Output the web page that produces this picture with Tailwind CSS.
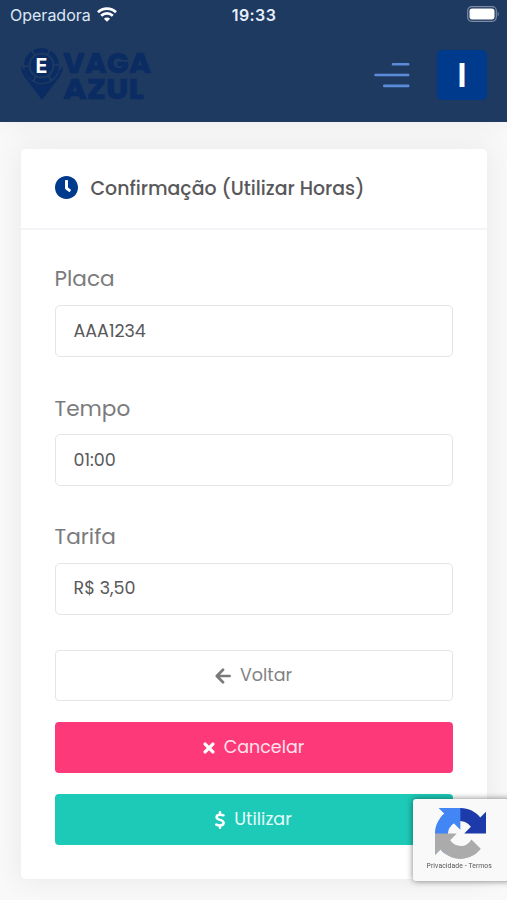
<!DOCTYPE html>
<html lang="pt-BR">
<head>
    <meta charset="utf-8">
    <title>Vaga Azul</title>
    <meta name="viewport" content="width=device-width, initial-scale=1.0">
    <script src="https://cdn.jsdelivr.net/npm/@tailwindcss/browser@4"></script>
</head>
<body class="bg-[#f9f9fa] h-[900px] overflow-hidden font-[Poppins,Inter,sans-serif]">
    <!-- Status bar + header -->
    <header class="h-[122px] bg-[#1f3a61] relative z-10 shadow-[0_0_28px_0_rgba(0,0,0,0.06)]">
        <div class="h-[30px] grid grid-cols-3 items-center pl-[10px] pr-2 text-white font-[Inter,sans-serif]">
            <div class="flex items-center gap-[6px]">
                <span class="text-[16px] leading-[30px] text-[#dce7f5]">Operadora</span>
                <svg class="w-[20px] h-[15px] -mt-[2px]" viewBox="0 0 20 15" fill="none" stroke="#fff" stroke-width="2.7">
                    <path d="M1 5.3a12.8 12.8 0 0 1 18 0M4.2 8.7a8.2 8.2 0 0 1 11.6 0"/>
                    <path d="M10 14.8L6.9 11.7a4.4 4.4 0 0 1 6.2 0z" fill="#fff" stroke="none"/>
                </svg>
            </div>
            <span class="text-center text-[16px] font-semibold tracking-[0.4px] text-[#e6effb] -ml-[1px]">19:33</span>
            <svg class="justify-self-end w-[34px] h-[16px] -mt-[2px]" viewBox="0 0 34 16">
                <rect x="2.7" y=".7" width="28.6" height="14.6" rx="4" fill="none" stroke="#7d8ba4" stroke-width="1.2"/>
                <rect x="4.5" y="2.6" width="25" height="10.8" rx="2.6" fill="#fff"/>
                <path d="M32.6 5.5c1.5.7 1.5 4.3 0 5z" fill="#7d8ba4"/>
            </svg>
        </div>
        <div class="flex items-center justify-between pl-[21px] pr-[20px] pt-[18px]">
            <svg class="w-[134px] h-[54px] overflow-visible" viewBox="0 0 134 54" fill="#0a2c63">
                <path d="M0 18c0 3 1 7 3.5 11L21 52l17.5-23c2.5-4 3.5-8 3.5-11l-4 5a17.5 17.5 0 0 1-34 0z"/>
                <circle cx="20.5" cy="17.5" r="15.2" fill="none" stroke="#0a2c63" stroke-width="4.5" stroke-dasharray="13.9 2"/>
                <circle cx="20.5" cy="17.5" r="11"/>
                <text x="20.5" y="24.8" text-anchor="middle" fill="#fff" font-family="Inter" font-weight="700" font-size="19.5">E</text>
                <g font-family="Poppins, Inter" font-weight="800" font-size="28.5" stroke="#0a2c63" stroke-width=".3">
                    <text x="42" y="25.3" textLength="88" lengthAdjust="spacingAndGlyphs">VAGA</text>
                    <text x="42" y="50.5" textLength="81" lengthAdjust="spacingAndGlyphs">AZUL</text>
                </g>
            </svg>
            <div class="flex items-center gap-[27px]">
                <svg class="w-[36px] h-[28px]" viewBox="0 0 36 28" stroke="#5b8cda" stroke-width="2.6" stroke-linecap="round">
                    <path d="M19 3.2H34.2M1.5 14H34.2M10.3 24.9H34.2"/>
                </svg>
                <div class="w-[50px] h-[50px] rounded-[5px] bg-[#003a8c] flex items-center justify-center">
                    <span class="text-white text-[34px] leading-none font-semibold">I</span>
                </div>
            </div>
        </div>
    </header>

    <!-- Card -->
    <main class="mx-[20.5px] mt-[27px] h-[730px] bg-white rounded-[5px] shadow-[0_0_28px_4px_rgba(0,0,0,0.06)]">
        <div class="h-[81px] flex items-center gap-[14px] pl-[34px] pb-[2px] border-b-2 border-[#f3f3f8]">
            <svg class="w-[23px] h-[23px]" viewBox="8 8 496 496" fill="#003a8c">
                <path d="M256,8C119,8,8,119,8,256S119,504,256,504,504,393,504,256,393,8,256,8Zm92.49,313h0l-20,25a16,16,0,0,1-22.49,2.5h0l-67-49.72a40,40,0,0,1-15-31.23V112a16,16,0,0,1,16-16h32a16,16,0,0,1,16,16V256l58,42.5A16,16,0,0,1,348.49,321Z"/>
            </svg>
            <h1 class="text-[18.9px] font-medium text-[#58585a] whitespace-nowrap pt-[3px] -ml-[1px]">Confirmação (Utilizar Horas)</h1>
        </div>
        <div class="px-[34px] pt-[32px]">
            <div class="h-[128.5px]">
                <label class="block h-[43px] text-[21.6px] leading-[34px] text-[#7b7b7d]">Placa</label>
                <div class="h-[52px] border-[1.5px] border-[#e5e5e8] rounded-[5px] px-[18px] text-[17.5px] leading-[50px] text-[#58585a]">AAA1234</div>
            </div>
            <div class="h-[129px]">
                <label class="block h-[43px] text-[21.6px] leading-[35px] text-[#7b7b7d]">Tempo</label>
                <div class="h-[52px] border-[1.5px] border-[#e5e5e8] rounded-[5px] px-[18px] text-[17.5px] leading-[50px] text-[#58585a]">01:00</div>
            </div>
            <div class="h-[130.5px]">
                <label class="block h-[43px] text-[21.6px] leading-[34px] text-[#7b7b7d]">Tarifa</label>
                <div class="h-[52px] border-[1.5px] border-[#e5e5e8] rounded-[5px] px-[18px] text-[17.5px] leading-[49px] text-[#58585a]">R$ 3,50</div>
            </div>
            <div class="flex flex-col gap-[21px] text-[17.5px]">
                <button class="h-[51px] border-[1.5px] border-[#e5e5e8] rounded-[4px] flex items-center justify-center gap-[9px] text-[#838385]">
                    <svg class="w-[16px] h-[16px]" viewBox="0 0 16 16" fill="none" stroke="#7a7a7c" stroke-width="2.7" stroke-linecap="round" stroke-linejoin="round">
                        <path d="M8 1.8L1.8 8L8 14.2M2 8H14.6"/>
                    </svg>
                    Voltar
                </button>
                <button class="h-[51px] bg-[#fd397a] rounded-[4px] flex items-center justify-center gap-[9px] text-[#ffe3ec]">
                    <svg class="w-[12px] h-[12px]" viewBox="0 0 13 13" fill="none" stroke="#fff" stroke-width="3.6" stroke-linecap="round">
                        <path d="M2.3 2.3L10.7 10.7M10.7 2.3L2.3 10.7"/>
                    </svg>
                    Cancelar
                </button>
                <button class="h-[51px] bg-[#1dc9b7] rounded-[4px] flex items-center justify-center gap-[9px] text-[#e3fbf8]">
                    <svg class="w-[10px] h-[18px]" viewBox="0 0 10 18" fill="none" stroke="#fff" stroke-width="2.5" stroke-linecap="round" stroke-linejoin="round">
                        <path d="M8.5 4.3C6 3.3 1.6 3.2 1.6 6.2C1.6 9.4 8.6 8.4 8.6 11.7C8.6 15 3.8 14.8 1.3 13.6M5 1.2V3.5M5 14.7V16.8"/>
                    </svg>
                    Utilizar
                </button>
            </div>
        </div>
    </main>

    <!-- reCAPTCHA badge -->
    <div class="fixed z-20 left-[413px] top-[799px] w-[100px] h-[82px] bg-[#f9f9f9] rounded-[3px] shadow-[0_0_6px_rgba(0,0,0,0.5)]">
        <svg class="ml-[21.5px] mt-[8.5px] w-[51px] h-[51px]" viewBox="0 0 64 64">
            <path fill="#1c3aa9" d="M64 31.955l-.033-1.37V4.687l-7.16 7.16C50.948 4.674 42.033.093 32.05.093c-10.4 0-19.622 4.96-25.458 12.64l11.736 11.86a15.55 15.55 0 0 1 4.754-5.334c2.05-1.6 4.952-2.906 8.968-2.906.485 0 .86.057 1.135.163 4.976.393 9.288 3.14 11.828 7.124l-8.307 8.307L64 31.953"/>
            <path fill="#4285f4" d="M31.862.094l-1.37.033H4.594l7.16 7.16C4.58 13.147 0 22.06 0 32.046c0 10.4 4.96 19.622 12.64 25.458L24.5 45.768a15.55 15.55 0 0 1-5.334-4.754c-1.6-2.05-2.906-4.952-2.906-8.968 0-.485.057-.86.163-1.135.393-4.976 3.14-9.288 7.124-11.828l8.307 8.307L31.86.095"/>
            <path fill="#ababab" d="M.001 32.045l.033 1.37v25.898l7.16-7.16c5.86 7.173 14.774 11.754 24.76 11.754 10.4 0 19.622-4.96 25.458-12.64l-11.736-11.86a15.55 15.55 0 0 1-4.754 5.334c-2.05 1.6-4.952 2.906-8.968 2.906-.485 0-.86-.057-1.135-.163-4.976-.393-9.288-3.14-11.828-7.124l8.307-8.307c-10.522.04-22.4.066-27.295-.005"/>
        </svg>
        <p class="ml-[13.5px] mt-[2px] text-[6.8px] leading-[10px] whitespace-nowrap font-[Roboto,sans-serif] tracking-[0.1px] text-[#555]">Privacidade - Termos</p>
    </div>
</body>
</html>
